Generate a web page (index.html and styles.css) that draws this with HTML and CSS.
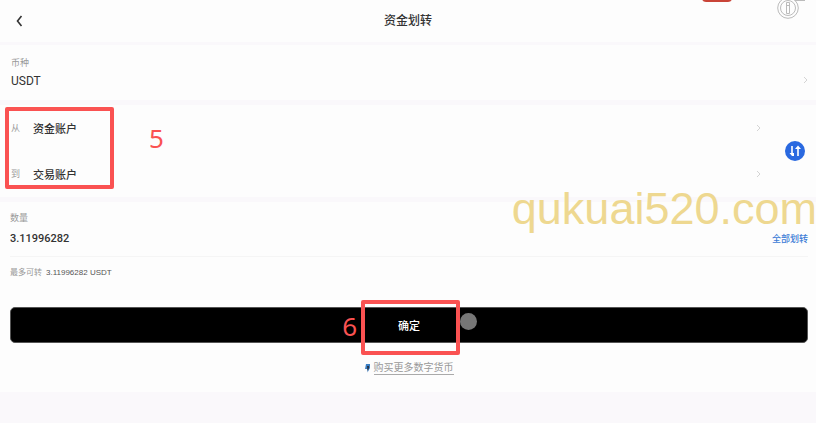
FILE: index.html
```
<!DOCTYPE html>
<html lang="zh-CN">

<head>
    <meta charset="UTF-8">
    <meta name="viewport" content="width=device-width, initial-scale=1.0">
    <title>资金划转</title>
    <link rel="stylesheet" href="styles.css">
</head>

<body>
    <div class="page">
        <header class="header">
            <button class="back-btn" type="button" aria-label="返回">
                <svg width="8" height="12" viewBox="0 0 8 12"><path d="M6.500 1L2.500 6l4 5" fill="none" stroke="#333" stroke-width="1.600"/></svg>
            </button>
            <h1>资金划转</h1>
        </header>

        <main>
            <!-- 币种 -->
            <section class="section currency">
                <div>
                    <div class="label" id="coin-label">币种</div>
                    <button class="coin-btn" type="button" aria-describedby="coin-label">USDT</button>
                </div>
                <svg class="arrow" width="5" height="8" viewBox="0 0 5 8"><path d="M1 1l3 3-3 3"/></svg>
            </section>

            <!-- 账户 -->
            <section class="section accounts">
                <div class="account-list">
                    <button class="account" type="button">
                        <span class="label">从</span>
                        <span class="account-name">资金账户</span>
                        <svg class="arrow" width="5" height="8" viewBox="0 0 5 8"><path d="M1 1l3 3-3 3"/></svg>
                    </button>
                    <button class="account" type="button">
                        <span class="label">到</span>
                        <span class="account-name">交易账户</span>
                        <svg class="arrow" width="5" height="8" viewBox="0 0 5 8"><path d="M1 1l3 3-3 3"/></svg>
                    </button>
                    <div class="mark mark-accounts"></div>
                    <span class="step step-accounts">5</span>
                </div>
                <button class="swap-btn" type="button" aria-label="互换账户">
                    <svg width="20" height="20" viewBox="0 0 20 20">
                        <circle cx="10" cy="10" r="10" fill="#2a69e0"/>
                        <path d="M7 5v8M13 7v8" stroke="#fff" stroke-width="1.600"/>
                        <path d="M4.500 12h4.500v3H7zM10 8h6l-3-3.500z" fill="#fff"/>
                    </svg>
                </button>
            </section>

            <!-- 数量 -->
            <section class="section amount">
                <label class="label" for="amount">数量</label>
                <div class="amount-row">
                    <input id="amount" type="text" inputmode="decimal" value="3.11996282">
                    <button class="all-btn" type="button">全部划转</button>
                </div>
                <p class="max">最多可转 <span>3.11996282 USDT</span></p>

                <div class="submit">
                    <button class="submit-btn" type="button">确定</button>
                    <div class="mark mark-submit"></div>
                    <span class="step step-submit">6</span>
                    <span class="touch"></span>
                </div>

                <div class="buy">
                    <svg width="5" height="9" viewBox="0 0 5 9"><path d="M1 0h4v4L2.500 8.500V5H0z" fill="#3b7fc5"/><path d="M2 2h2v2L2.500 7z" fill="#2a3444"/></svg>
                    <a href="#">购买更多数字货币</a>
                </div>
            </section>
        </main>

        <span class="badge"></span>
        <svg class="info" width="28" height="20" viewBox="0 0 28 20" fill="none" stroke="#bbb">
            <circle cx="11" cy="8" r="10.300"/>
            <circle cx="11" cy="8" r="7.500"/>
            <path d="M9.500 2.500h3v11h-3zM9.500 5.500h3M18 .5h10"/>
        </svg>
        <div class="watermark">qukuai520.com</div>
    </div>
</body>

</html>
```
FILE: styles.css
```
* {
    box-sizing: border-box;
}

body {
    margin: 0;
    font-family: Roboto, "Noto Sans CJK SC", sans-serif;
    font-size: 11px;
    color: #333;
    background-color: #faf8fb;
}

button {
    padding: 0;
    border: none;
    background: none;
    font: inherit;
    color: inherit;
    cursor: pointer;
}

svg {
    display: block;
}

.page {
    position: relative;
    min-height: 100vh;
    overflow: hidden;
}

.header {
    display: grid;
    grid-template-columns: 20px 1fr 20px;
    align-items: center;
    height: 42px;
    padding: 0 14px;
    background-color: #fdfdfd;
}

.back-btn {
    height: 20px;
    padding-left: 1px;
}

h1 {
    margin: 0;
    font-size: 12px;
    line-height: 20px;
    font-weight: 500;
    text-align: center;
}

main {
    display: grid;
    gap: 5px;
    padding-top: 3px;
}

.section {
    padding: 11px 8px 10px 11px;
    background-color: #fdfdfd;
}

.label {
    font-size: 9px;
    line-height: 14px;
    color: #999;
}

.arrow {
    fill: none;
    stroke: #d4d4d4;
}

.currency {
    display: flex;
    justify-content: space-between;
    align-items: flex-end;
}

.currency .arrow {
    margin-bottom: 6px;
}

.coin-btn {
    display: block;
    margin-top: 2px;
    font-size: 12px;
    line-height: 18px;
}

.accounts {
    display: flex;
    align-items: center;
    gap: 24px;
    padding: 0 11px;
}

.account-list {
    position: relative;
    flex: 1;
}

.account {
    display: flex;
    align-items: center;
    gap: 13px;
    width: 100%;
    height: 46px;
}

.account-name {
    flex: 1;
    text-align: left;
    font-weight: 500;
}

.swap-btn {
    height: 20px;
}

.amount {
    padding: 9px 8px 17px 10px;
}

.amount .label {
    display: block;
}

.amount-row {
    display: flex;
    justify-content: space-between;
    align-items: center;
    padding: 3px 0 8px;
    border-bottom: 1px solid #f5f5f5;
}

.amount-row input {
    flex: 1;
    min-width: 0;
    height: 20px;
    padding: 0;
    border: none;
    outline: none;
    background: none;
    font: inherit;
    font-weight: 500;
    color: #333;
}

.all-btn {
    font-size: 9px;
    font-weight: 500;
    color: #3b7bd6;
}

.max {
    margin: 9px 0 27px;
    font-size: 8px;
    line-height: 14px;
    color: #999;
}

.max span {
    margin-left: 2px;
    font-family: "Liberation Sans", sans-serif;
    color: #555;
}

.submit {
    position: relative;
}

.submit-btn {
    width: 100%;
    height: 36px;
    border: 1px solid #555;
    border-radius: 5px;
    background-color: #000;
    color: #fff;
    font-weight: 500;
}

.buy {
    display: flex;
    justify-content: center;
    align-items: center;
    gap: 4px;
    margin-top: 18px;
}

.buy a {
    border-bottom: 1px solid #aaa;
    font-size: 10px;
    line-height: 13px;
    color: #999;
    text-decoration: none;
}

/* 步骤标注 */
.mark {
    position: absolute;
    border: 4px solid #fa5252;
    border-radius: 2px;
    pointer-events: none;
}

.mark-accounts {
    top: 2px;
    left: -6px;
    width: 109px;
    height: 82px;
}

.mark-submit {
    top: -7px;
    left: calc(50% - 48px);
    width: 99px;
    height: 55px;
}

.step {
    position: absolute;
    font-family: "Noto Sans", sans-serif;
    font-size: 26px;
    line-height: 26px;
    color: #fa5252;
}

.step-accounts {
    top: 20px;
    left: 138px;
}

.step-submit {
    top: 6px;
    right: calc(50% + 52px);
}

.touch {
    position: absolute;
    top: 6px;
    left: calc(50% + 51px);
    width: 17px;
    height: 17px;
    border-radius: 50%;
    background-color: #777;
}

.badge {
    position: absolute;
    top: -8px;
    right: 84px;
    width: 30px;
    height: 10px;
    border-radius: 4px;
    background-color: #c94438;
}

.info {
    position: absolute;
    top: 0;
    right: 11px;
}

.watermark {
    position: absolute;
    top: 183px;
    right: -1px;
    font-family: "Liberation Sans", Arial, sans-serif;
    font-size: 45px;
    line-height: 52px;
    color: #eed890;
    pointer-events: none;
}
```
